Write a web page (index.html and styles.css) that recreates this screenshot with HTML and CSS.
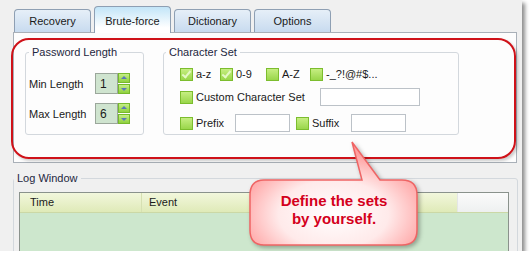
FILE: index.html
```html
<!DOCTYPE html>
<html lang="en">
  <head>
    <meta charset="UTF-8" />
    <title>Brute-force</title>
    <link rel="stylesheet" href="styles.css">
  </head>
  <body>
    <div class="window">
      <div class="tabs">
        <div class="tab">Recovery</div>
        <div class="tab active">Brute-force</div>
        <div class="tab">Dictionary</div>
        <div class="tab">Options</div>
      </div>

      <div class="panel">
        <fieldset class="group pw">
          <legend>Password Length</legend>
          <div class="len-row">
            <span class="len-label">Min Length</span>
            <div class="spin">
              <span class="spin-val">1</span>
              <span class="spin-btns"><i class="up"></i><i class="down"></i></span>
            </div>
          </div>
          <div class="len-row">
            <span class="len-label">Max Length</span>
            <div class="spin">
              <span class="spin-val">6</span>
              <span class="spin-btns"><i class="up"></i><i class="down"></i></span>
            </div>
          </div>
        </fieldset>

        <fieldset class="group charset">
          <legend>Character Set</legend>
          <div class="cs-row first">
            <label class="opt"><span class="box checked"></span>a-z</label>
            <label class="opt"><span class="box checked"></span>0-9</label>
            <label class="opt"><span class="box"></span>A-Z</label>
            <label class="opt"><span class="box"></span>-_?!@#$...</label>
          </div>
          <div class="cs-row second">
            <label class="opt"><span class="box"></span><span class="lbl-long">Custom Character Set</span></label>
            <span class="field long"></span>
          </div>
          <div class="cs-row third">
            <label class="opt"><span class="box"></span><span class="lbl-short">Prefix</span></label>
            <span class="field short"></span>
            <label class="opt suffix"><span class="box"></span><span class="lbl-short">Suffix</span></label>
            <span class="field short"></span>
          </div>
        </fieldset>
      </div>

      <fieldset class="group log">
        <legend>Log Window</legend>
        <div class="list">
          <div class="list-head">
            <span class="col-time">Time</span>
            <span class="col-event">Event</span>
            <span class="col-rest"></span>
          </div>
          <div class="list-body"></div>
        </div>
      </fieldset>

      <!-- annotation -->
      <div class="highlight"></div>
      <div class="callout">
        <svg width="172" height="108" viewBox="0 0 172 108">
          <defs>
            <radialGradient id="bub" cx="50%" cy="70%" r="60%">
              <stop offset="0" stop-color="#ffffff" />
              <stop offset="0.55" stop-color="#ffeaea" />
              <stop offset="1" stop-color="#ff9e9e" />
            </radialGradient>
          </defs>
          <path d="M15,39 H113 L103,1 L131,39 H153 Q168,39 168,54 V89 Q168,104 153,104 H15 Q1,104 1,89 V54 Q1,39 15,39 Z"
                fill="url(#bub)" stroke="#ef6464" stroke-width="1.5" />
        </svg>
        <div class="callout-text">Define the sets<br>by yourself.</div>
      </div>
    </div>
  </body>
</html>
```
FILE: styles.css
```css
* {
  margin: 0;
  padding: 0;
}
body {
  background: #fff;
  font-family: "Liberation Sans", Arial, sans-serif;
  font-size: 11px;
  color: #1a1a1a;
}
.window {
  position: relative;
  width: 522px;
  height: 251px;
  background: #f0f0f0;
  box-shadow: 3px 3px 4px rgba(0, 0, 0, 0.45);
  overflow: hidden;
}

/* tabs */
.tabs {
  display: flex;
  align-items: flex-end;
  gap: 3px;
  height: 32px;
  padding-left: 14px;
  box-sizing: border-box;
  position: relative;
  z-index: 1;
}
.tab {
  width: 77px;
  height: 23px;
  box-sizing: border-box;
  border: 1px solid #8e9fb3;
  border-bottom: none;
  border-radius: 4px 4px 0 0;
  background: linear-gradient(#e6eff8, #c8dbef);
  text-align: center;
  line-height: 22px;
}
.tab.active {
  height: 27px;
  margin-bottom: -1px;
  padding-top: 3px;
  line-height: 23px;
  background: linear-gradient(#c2e5f8, #ffffff 80%);
}

/* panel */
.panel {
  box-sizing: border-box;
  margin-left: 13px;
  width: 504px;
  height: 131px;
  border: 1px solid #a9b0b8;
  background: #fdfdfd;
  display: flex;
  align-items: flex-start;
  gap: 19px;
  padding: 12px 0 0 11px;
}
fieldset.group {
  box-sizing: border-box;
  border: 1px solid #d3d8dd;
  border-radius: 3px;
  min-width: 0;
}
fieldset.group legend {
  padding: 0 3px;
  line-height: 14px;
  color: #1e2740;
}
.pw {
  width: 119px;
  height: 90px;
  padding: 14px 0 0 3px;
}
.pw legend {
  margin-left: 0;
}
.len-row {
  display: flex;
  align-items: center;
  height: 21px;
}
.len-row + .len-row {
  margin-top: 9px;
}
.len-label {
  width: 66px;
}
.spin {
  display: flex;
  height: 21px;
}
.spin-val {
  width: 23px;
  box-sizing: border-box;
  border: 1px solid #9ba79b;
  background: #cfe4cf;
  padding-left: 4px;
  line-height: 21px;
  font-size: 12px;
}
.spin-btns {
  display: flex;
  flex-direction: column;
  gap: 1px;
  width: 12px;
}
.spin-btns i {
  flex: 1;
  position: relative;
  border: 1px solid #77b92c;
  background: linear-gradient(#c4ee86, #8fd13e);
}
.spin-btns i::after {
  content: "";
  position: absolute;
  left: 2px;
  border-left: 3px solid transparent;
  border-right: 3px solid transparent;
}
.spin-btns .up::after {
  top: 2px;
  border-bottom: 3px solid #5a78b8;
}
.spin-btns .down::after {
  top: 3px;
  border-top: 3px solid #5a78b8;
}

/* character set */
.charset {
  width: 296px;
  height: 90px;
  padding: 6px 0 0 16px;
}
.charset legend {
  margin-left: -14px;
}
.cs-row {
  display: flex;
  align-items: center;
  height: 18px;
}
.cs-row.first {
  display: grid;
  grid-template-columns: 40px 46px 44px auto;
}
.cs-row.second {
  margin-top: 5px;
}
.cs-row.third {
  margin-top: 8px;
}
.opt {
  display: flex;
  align-items: center;
}
.box {
  width: 13px;
  height: 13px;
  box-sizing: border-box;
  border: 1px solid #7cbd2e;
  background: linear-gradient(#c6ee82, #99d64a);
  margin-right: 3px;
  position: relative;
}
.box.checked::after {
  content: "";
  position: absolute;
  left: 3px;
  top: 0px;
  width: 3px;
  height: 7px;
  border-right: 2px solid #e4f8c6;
  border-bottom: 2px solid #e4f8c6;
  transform: rotate(40deg);
}
.lbl-long {
  width: 124px;
}
.lbl-short {
  width: 39px;
}
.suffix {
  margin-left: 6px;
}
.field {
  box-sizing: border-box;
  height: 18px;
  border: 1px solid #bcc2c8;
  background: #fff;
}
.field.long {
  width: 100px;
}
.field.short {
  width: 55px;
}

/* log window */
.log {
  margin: 8px 0 0 13px;
  width: 505px;
  height: 100px;
  padding: 7px 0 0 5px;
}
.log legend {
  margin-left: -5px;
  color: #1c2a5c;
}
.list {
  width: 490px;
  height: 70px;
  box-sizing: border-box;
  border: 1px solid #8a928c;
  display: flex;
  flex-direction: column;
}
.list-head {
  display: flex;
  height: 20px;
  box-sizing: border-box;
  border-bottom: 1px solid #cbd8a6;
  line-height: 19px;
}
.col-time {
  width: 122px;
  padding-left: 10px;
  box-sizing: border-box;
  border-right: 1px solid #d6e0b2;
  background: linear-gradient(#f2f7dc, #dfeab8);
}
.col-event {
  width: 315px;
  padding-left: 7px;
  box-sizing: border-box;
  background: linear-gradient(#f2f7dc, #dfeab8);
}
.col-rest {
  flex: 1;
  border-left: 1px solid #e4e6e6;
  background: linear-gradient(#fbfbfb, #eef0f0);
}
.list-body {
  flex: 1;
  background: #cde7cd;
}

/* annotation overlay */
.highlight {
  position: absolute;
  left: 11px;
  top: 38px;
  width: 505px;
  height: 121px;
  box-sizing: border-box;
  border: 2px solid #cf1219;
  border-radius: 18px;
  box-shadow: 2px 2px 3px rgba(0, 0, 0, 0.2);
  pointer-events: none;
}
.callout {
  position: absolute;
  left: 249px;
  top: 141px;
  width: 172px;
  height: 108px;
}
.callout svg {
  display: block;
  filter: drop-shadow(2px 2px 2px rgba(0, 0, 0, 0.3));
}
.callout-text {
  position: absolute;
  left: 0;
  top: 51px;
  width: 170px;
  text-align: center;
  font-size: 15px;
  font-weight: bold;
  line-height: 18px;
  color: #d4001c;
}
```
